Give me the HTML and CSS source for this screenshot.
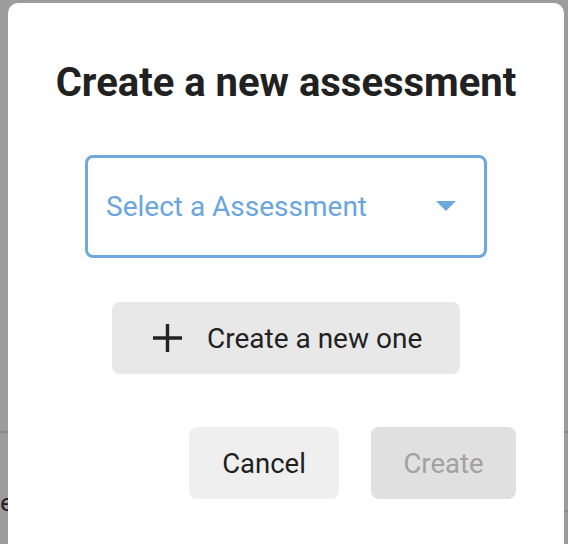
FILE: index.html
```html
<!DOCTYPE html>
<html>
<head>
<meta charset="utf-8">
<link rel="stylesheet" href="styles.css">
</head>
<body>
<div class="page">
  <div class="page-row page-row-top"></div>
  <div class="page-row page-row-text"><span class="page-label">Name</span></div>
</div>
<div class="page-side-line"></div>
<div class="modal">
  <h1 class="modal-title">Create a new assessment</h1>
  <div class="select">
    <span class="select-text">Select a Assessment</span>
    <svg class="select-caret" width="20" height="10" viewBox="0 0 20 10"><path d="M0 0 H20 L10 10 Z" fill="#6fa8dc"/></svg>
  </div>
  <button class="btn-new">
    <svg class="plus" width="30" height="30" viewBox="0 0 30 30"><path d="M0 15 H29 M14.5 1 V29" stroke="#222" stroke-width="3.4" fill="none"/></svg>
    <span>Create a new one</span>
  </button>
  <div class="modal-footer">
    <button class="btn btn-cancel">Cancel</button>
    <button class="btn btn-create" disabled>Create</button>
  </div>
</div>
</body>
</html>
```

FILE: styles.css
```css
* { box-sizing: border-box; }
html, body { margin: 0; padding: 0; }
body {
  width: 568px;
  height: 544px;
  overflow: hidden;
  background: #9c9c9c;
  font-family: Roboto, "Liberation Sans", sans-serif;
  position: relative;
}
.page { width: 568px; }
.page-row-top {
  height: 433px;
  border-bottom: 2px solid #8a8a8a;
}
.page-row-text {
  height: 111px;
  padding-top: 56px;
  position: relative;
}
.page-label {
  display: block;
  font-size: 24px;
  color: #1c1c1c;
  margin-left: -51px;
}
.page-side-line {
  position: absolute;
  right: 0;
  top: 510px;
  width: 10px;
  border-top: 2px solid #8a8a8a;
}
.modal {
  position: absolute;
  left: 8px;
  top: 3px;
  width: 556px;
  height: 560px;
  background: #fff;
  border-radius: 10px;
  display: flex;
  flex-direction: column;
  align-items: center;
  padding: 57px 48px 0 48px;
}
.modal-title {
  margin: 0;
  font-size: 40px;
  line-height: 46px;
  font-weight: 700;
  color: #212121;
  white-space: nowrap;
}
.select {
  margin-top: 49px;
  width: 402px;
  height: 103px;
  border: 3px solid #6fa8dc;
  border-radius: 8px;
  display: flex;
  align-items: center;
  justify-content: space-between;
  padding: 0 28px 0 18px;
}
.select-text {
  font-size: 28px;
  color: #6aa5de;
  line-height: 1;
}
.select-caret { display: block; margin-top: -2px; }
.btn-new {
  margin-top: 44px;
  width: 348px;
  height: 72px;
  border: none;
  border-radius: 8px;
  background: #e8e8e8;
  display: flex;
  align-items: center;
  padding: 0 0 0 41px;
  font-family: inherit;
  font-size: 28px;
  color: #222;
  gap: 24px;
}
.plus { display: block; }
.modal-footer {
  margin-top: 53px;
  width: 100%;
  display: flex;
  justify-content: flex-end;
  gap: 32px;
}
.btn {
  height: 72px;
  border: none;
  border-radius: 8px;
  font-family: inherit;
  font-size: 27.5px;
}
.btn-cancel { width: 150px; background: #efefef; color: #1f1f1f; }
.btn-create { width: 145px; background: #e0e0e0; color: #a2a2a2; }
```
